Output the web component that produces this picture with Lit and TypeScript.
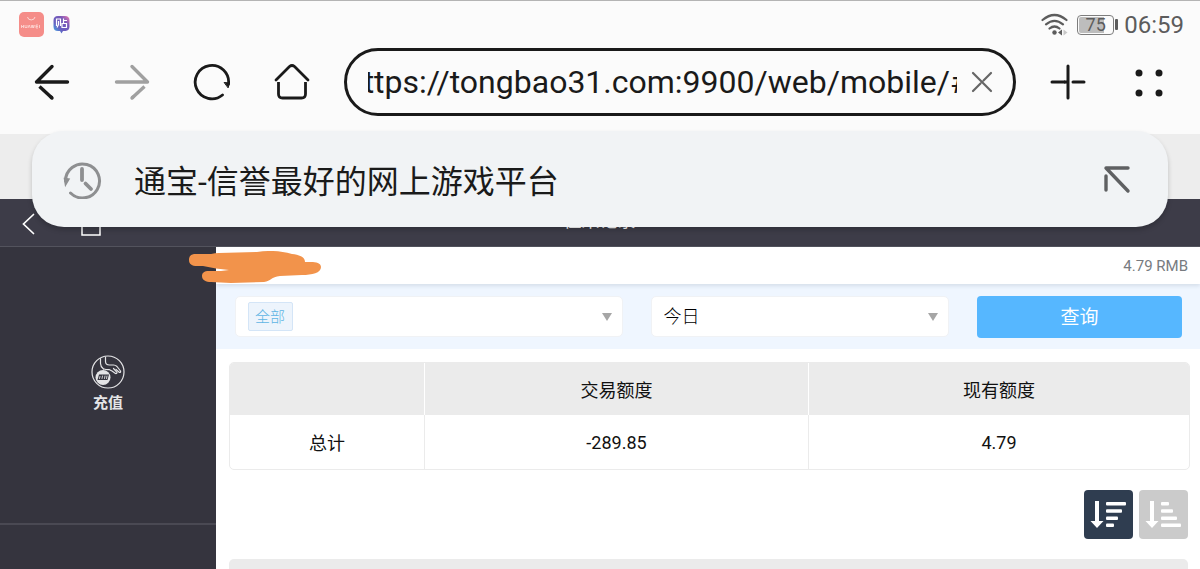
import { LitElement, html, css, svg } from "lit";
import { customElement, query } from "lit/decorators.js";

const sortIcon = (widths: number[]) => svg`
  <path d="M11 11h4v20h4.500L13 38 6.500 31H11z" fill="#fff"/>
  ${widths.map((w, i) => svg`<rect x="22" y=${12 + i * 7.2} width=${w} height="3.500" rx="1" fill="#fff"/>`)}
`;

@customElement("app-root")
export class AppRoot extends LitElement {
  @query(".url") private url!: HTMLInputElement;

  static styles = css`
    :host {
      display: flex;
      flex-direction: column;
      position: relative;
      height: 100vh;
      overflow: hidden;
      background: #fff;
      color: #1a1a1a;
      font-family: Roboto, "Noto Sans CJK SC", sans-serif;
    }
    * { box-sizing: border-box; }
    svg { display: block; flex: none; }
    button {
      margin: 0;
      padding: 0;
      border: 0;
      background: none;
      color: inherit;
      font: inherit;
    }
    input, select { font: inherit; color: inherit; margin: 0; outline: 0; }

    .browser { background: #fbfbfb; border-top: 1px solid #b4b4b4; flex: none; }
    .status {
      display: flex;
      align-items: center;
      height: 47px;
      padding: 0 16px 0 19px;
      color: #5c5c5c;
    }
    .status .apps { display: flex; align-items: center; gap: 9px; margin-right: auto; }
    .status .signal { margin-right: 9px; }
    .battery {
      display: flex;
      align-items: center;
      margin-right: 6px;
    }
    .level {
      width: 37px;
      height: 20px;
      border: 1px solid #7d7d7d;
      border-radius: 4px;
      background: linear-gradient(to right, #bdbdbd 75%, #fbfbfb 75%) content-box;
      padding: 1px;
      font-size: 18px;
      line-height: 16px;
      text-align: center;
    }
    .cap { width: 3px; height: 11px; margin-left: 1px; border-radius: 1px; background: #5c5c5c; }
    .time { font-size: 24px; line-height: 30px; }

    .toolbar { display: flex; align-items: center; height: 86px; padding: 0 32px 18px; }
    .toolbar > button { width: 40px; height: 40px; margin-right: 40px; flex: none; }
    .toolbar > button:last-child { margin-right: 0; }
    .address {
      flex: 1;
      min-width: 0;
      display: flex;
      align-items: center;
      height: 68px;
      margin: 0 32px 0 -8px;
      padding: 0 19px 0 21px;
      border: 3px solid #1a1a1a;
      border-radius: 34px;
    }
    .url {
      flex: 1;
      min-width: 0;
      height: 48px;
      padding: 0;
      border: 0;
      background: none;
      font-size: 32px;
    }
    .clear { width: 24px; height: 24px; margin-left: 13px; }

    .suggestion {
      position: absolute;
      z-index: 2;
      top: 131px;
      left: 32px;
      right: 32px;
      height: 96px;
      display: flex;
      align-items: center;
      padding: 0 36px 0 30px;
      border-radius: 32px;
      background: #f1f3f5;
      box-shadow: 0 3px 5px rgba(0, 0, 0, 0.2);
      font-size: 32px;
      color: #1a1a1a;
      text-decoration: none;
    }
    .suggestion span { flex: 1; margin-left: 32px; padding-top: 6px; line-height: 48px; }

    .strip { flex: none; height: 65px; background: #ededed; }
    .titlebar {
      flex: none;
      display: flex;
      align-items: flex-start;
      height: 48px;
      padding: 13px 20px 0 21px;
      border-bottom: 1px solid #53535d;
      background: #3d3c48;
      color: #fff;
    }
    .titlebar .home { margin-left: 42px; }
    .titlebar h1 {
      flex: 1;
      margin: 0 82px 0 0;
      font-size: 18px;
      line-height: 18px;
      font-weight: 400;
      text-align: center;
    }

    .body { flex: 1; min-height: 0; display: flex; }
    .side { flex: none; width: 18%; background: #35343e; }
    .side a {
      display: flex;
      flex-direction: column;
      align-items: center;
      justify-content: center;
      gap: 4px;
      height: 278px;
      padding-bottom: 2px;
      border-bottom: 2px solid #4a4953;
      color: #e4e4e6;
      font-size: 15px;
      line-height: 20px;
      font-weight: 700;
      text-decoration: none;
    }
    .main { flex: 1; min-width: 0; }
    .account {
      position: relative;
      display: flex;
      align-items: center;
      justify-content: flex-end;
      height: 37px;
      padding: 0 12px;
      box-shadow: 0 2px 4px rgba(60, 80, 100, 0.14);
      color: #777b80;
      font-size: 15px;
    }
    .scribble { position: absolute; left: -27px; top: 4px; }
    .filters {
      display: grid;
      grid-template-columns: 388fr 299fr 205fr;
      align-items: center;
      gap: 28px;
      height: 65px;
      padding: 0 18px 0 19px;
      background: #eff6ff;
    }
    .field {
      display: flex;
      align-items: center;
      justify-content: space-between;
      height: 41px;
      padding: 0 10px 0 12px;
      border: 1px solid #f0f2f5;
      border-radius: 5px;
      background: #fff;
    }
    select { appearance: none; border: 0; background: none; padding: 0; }
    .day { flex: 1; font-size: 18px; font-weight: 300; color: #000; }
    .tag {
      height: 29px;
      padding: 0 6px;
      border: 1px solid #d4e5f7;
      border-radius: 2px;
      background: #edf4fc;
      color: #5fb4e4;
      font-size: 15px;
      font-weight: 300;
    }
    .query {
      height: 42px;
      padding-bottom: 3px;
      border-radius: 4px;
      background: #56b7ff;
      color: #fff;
      font-size: 19px;
    }

    .records { padding: 13px 10px 0 13px; }
    table {
      width: 100%;
      table-layout: fixed;
      border-collapse: separate;
      border-spacing: 0;
      border: 1px solid #ebebeb;
      border-radius: 5px;
      overflow: hidden;
      font-size: 18px;
      color: #111;
    }
    .first { width: 195px; }
    .last { width: 380px; }
    th, td { padding: 0; text-align: center; font-weight: 400; border-right: 1px solid #ebebeb; }
    th { height: 52px; background: #ebebeb; border-right-color: #fff; }
    td { height: 54px; }
    th:last-child, td:last-child { border-right: 0; }
    .sort { display: flex; justify-content: flex-end; gap: 6px; margin: 20px 2px 20px 0; }
    .sort button { width: 49px; height: 49px; border-radius: 4px; background: #cbcbcb; }
    .sort .active { background: #2f3d50; }
    .list { height: 53px; margin-right: 2px; border-radius: 5px; background: #ebebeb; }
  `;

  firstUpdated() {
    this.url.scrollLeft = 22;
  }

  render() {
    return html`
      <header class="browser">
        <div class="status">
          <div class="apps">
            <svg width="25" height="25" viewBox="0 0 25 25">
              <rect width="25" height="25" rx="5" fill="#f58d89"/>
              <path d="M8.500 5a3.800 3.500 0 0 0 7.500 0" fill="none" stroke="#fcd8d5" stroke-width="1"/>
              <path d="M2.500 13v3m2-3v3m-2-1.500h2M6 13v2.500h2V13M9 16l1.200-3 1.200 3m.8-3 .8 3 .8-3 .8 3 .8-3M19 13h-2v3h2m-2-1.500h2M20.500 13v3" fill="none" stroke="#fcdad8" stroke-width=".8"/>
            </svg>
            <svg width="17" height="19" viewBox="0 0 17 19">
              <defs><linearGradient id="g" x1="0" y1="1" x2="1" y2="0"><stop stop-color="#38b7ee"/><stop offset=".35" stop-color="#665ec0"/><stop offset=".7" stop-color="#7859b8"/><stop offset="1" stop-color="#f27cb0"/></linearGradient></defs>
              <path d="M5 1h7q4.500 0 4.500 4.500v6q0 4-4 4.500H10l-1.500 2.500L7 16H5Q.5 16 .5 11.500v-6Q.5 1 5 1z" fill="url(#g)"/>
              <path d="M3.500 11V4h4v7M5.500 6v3.500l-1.500 3M10.500 3.500V8M10.500 5.500h3.500M9 8.500h4.500v4H9z" fill="none" stroke="#fff" stroke-width="1.200"/>
            </svg>
          </div>
          <svg class="signal" width="27" height="23" viewBox="0 0 27 23" fill="none" stroke="#5c5c5c" stroke-width="2.200" stroke-linecap="round">
            <path d="M1.500 7q12-10 24 0M5 11.300q8.500-7 17 0M8.500 15.500q5-4 10 0"/>
            <circle cx="13.500" cy="19.500" r="2.200" fill="#5c5c5c" stroke="none"/>
            <path d="m17 19.500 4-3v6z" fill="#5c5c5c" stroke="none"/><path d="m26.500 19.500-4-3v6z" fill="#c8c8c8" stroke="none"/>
          </svg>
          <div class="battery"><div class="level">75</div><div class="cap"></div></div>
          <time class="time">06:59</time>
        </div>
        <nav class="toolbar">
          <button aria-label="后退"><svg width="40" height="40" viewBox="0 0 40 40" fill="none" stroke="#1a1a1a" stroke-width="3.400" stroke-linecap="round" stroke-linejoin="round"><path d="M35.500 20H4.500L20 4.500"/><path d="M7.500 24.500 20 36" stroke-linecap="butt"/><path d="M19 35l1 1"/></svg></button>
          <button aria-label="前进"><svg width="40" height="40" viewBox="0 0 40 40" fill="none" stroke="#a0a0a0" stroke-width="3.400" stroke-linecap="round" stroke-linejoin="round"><path d="M4.500 20h31L20 4.500"/><path d="M32.500 24.500 20 36" stroke-linecap="butt"/><path d="M21 35l-1 1"/></svg></button>
          <button aria-label="刷新"><svg width="40" height="40" viewBox="0 0 40 40" fill="none" stroke="#1a1a1a" stroke-width="2.800" stroke-linecap="round"><path d="M30.500 33A16.700 16.700 0 1 1 36.500 22"/><path d="M32.500 20.500l5 .5-1.300 4.500z" fill="#1a1a1a" stroke-width="1"/></svg></button>
          <button aria-label="主页"><svg width="40" height="40" viewBox="0 0 40 40" fill="none" stroke="#1a1a1a" stroke-width="2.800" stroke-linecap="round" stroke-linejoin="round"><path d="M4 18 17.500 4.500q2.500-2 5 0L36 18"/><path d="M6.500 20v12q0 4 4 4h19q4 0 4-4V20" stroke-linecap="butt"/></svg></button>
          <div class="address">
            <input class="url" type="text" aria-label="网址" value="https://tongbao31.com:9900/web/mobile/#/" />
            <button class="clear" aria-label="清除"><svg width="24" height="24" viewBox="0 0 24 24" stroke="#666" stroke-width="2.200" stroke-linecap="round"><path d="M3 3l18 18M21 3l-7.500 7.500M10.500 13.500 3 21"/></svg></button>
          </div>
          <button aria-label="新建标签页"><svg width="40" height="40" viewBox="0 0 40 40" stroke="#1a1a1a" stroke-width="3" stroke-linecap="round"><path d="M20 4v32M4 20h12.500M25 20h11"/><path d="M16 20h4" stroke-linecap="butt"/></svg></button>
          <button aria-label="菜单"><svg width="40" height="40" viewBox="0 0 40 40" fill="#1a1a1a"><circle cx="11" cy="11" r="3.500"/><circle cx="31" cy="11" r="3.500"/><circle cx="11" cy="31" r="3.500"/><circle cx="31" cy="31" r="3.500"/></svg></button>
        </nav>
      </header>

      <a class="suggestion" href="#">
        <svg width="40" height="40" viewBox="0 0 40 40" fill="none" stroke="#8e8f91" stroke-width="3" stroke-linecap="round"><path d="M8.500 34A17 17 0 1 0 3.500 22"/><path d="M2.500 19.500l4.500.5-3.500 6z" fill="#8e8f91" stroke-width="1.500"/><path d="M20 10v11M23.500 24.500l5.500 5.500" stroke-width="3.800"/></svg>
        <span>通宝-信誉最好的网上游戏平台</span>
        <svg width="30" height="30" viewBox="0 0 30 30" fill="none" stroke="#5f6062" stroke-width="3.400" stroke-linecap="round" stroke-linejoin="round"><path d="M26 4H4l22 23"/><path d="M4 12v14" /></svg>
      </a>

      <div class="strip"></div>
      <div class="titlebar">
        <button aria-label="返回"><svg width="18" height="23" viewBox="0 0 18 23" fill="none" stroke="#fff" stroke-width="1.700" stroke-linecap="round"><path d="M12.500 2.500 2.500 12l10 9.500"/></svg></button>
        <button class="home" aria-label="首页"><svg width="20" height="24" viewBox="0 0 20 24" fill="none" stroke="#fff" stroke-width="1.500"><path d="M1 9v14h18V9M0 10l10-9 10 9"/></svg></button>
        <h1>往来记录</h1>
      </div>

      <div class="body">
        <aside class="side">
          <a href="#">
            <svg width="34" height="34" viewBox="0 0 34 34" fill="none" stroke="#e4e4e6" stroke-width="1.200" stroke-linecap="round" stroke-linejoin="round">
              <circle cx="17" cy="17" r="16"/>
              <path d="M9.500 3.500v5q0 3 3 5.500"/>
              <path d="M14.500 2v4.500q0 3.500 4 3.500h4q2 0 3.500 1.500l3.500 4.500q.5 1.500-1 1.500l-3.500-3"/>
              <path d="M13 14q3 1 5 .5l3 1.500 3.500 2.500q1.500.3 1.500-1.200L22.500 13.500"/>
              <circle cx="12" cy="22.500" r="7.500" fill="#e4e4e6" stroke="none"/>
              <path d="M8 19.500h10l-1.500 5.500h-10z" fill="#35343e" stroke="none"/>
              <path d="M9 21.500l-.5 2m3-2.500-.5 2.500m3-2.500-.5 2.500m2.500-2.500-.5 2.500" stroke-width=".9"/>
            </svg>
            <span>充值</span>
          </a>
        </aside>
        <main class="main">
          <div class="account">
            <svg class="scribble" width="132" height="32" viewBox="0 0 132 32" fill="#f2934b"><path d="M7 3C2 3 0 5 0 9s3 6 8 6l6 0 13 2.500 13 1.500-8 1H20c-5 0-7 2-7 5 0 4 4 6 9 6l20 1 33-1c7-1 7-5 16-6l22-1c10 0 19-2 19-8 0-4-5-5-10-5h-6c0-5-5-7-13-8C92 0 82-1 68 1L30 2q-4 0-8 1z"/></svg>
            <span>4.79 RMB</span>
          </div>
          <form class="filters" @submit=${(e: Event) => e.preventDefault()}>
            <div class="field">
              <select class="tag" aria-label="类型"><option>全部</option></select>
              <svg width="10" height="8" viewBox="0 0 10 8"><path d="M0 0h10L5 8z" fill="#a6a6a6"/></svg>
            </div>
            <div class="field">
              <select class="day" aria-label="日期"><option>今日</option></select>
              <svg width="10" height="8" viewBox="0 0 10 8"><path d="M0 0h10L5 8z" fill="#a6a6a6"/></svg>
            </div>
            <button class="query">查询</button>
          </form>
          <section class="records">
            <table>
              <colgroup><col class="first" /><col /><col class="last" /></colgroup>
              <thead><tr><th></th><th>交易额度</th><th>现有额度</th></tr></thead>
              <tbody><tr><td>总计</td><td>-289.85</td><td>4.79</td></tr></tbody>
            </table>
            <div class="sort">
              <button class="active" aria-label="降序"><svg width="49" height="49" viewBox="0 0 49 49">${sortIcon([20, 16, 12, 8])}</svg></button>
              <button aria-label="升序"><svg width="49" height="49" viewBox="0 0 49 49">${sortIcon([8, 12, 16, 20])}</svg></button>
            </div>
            <div class="list"></div>
          </section>
        </main>
      </div>
    `;
  }
}
